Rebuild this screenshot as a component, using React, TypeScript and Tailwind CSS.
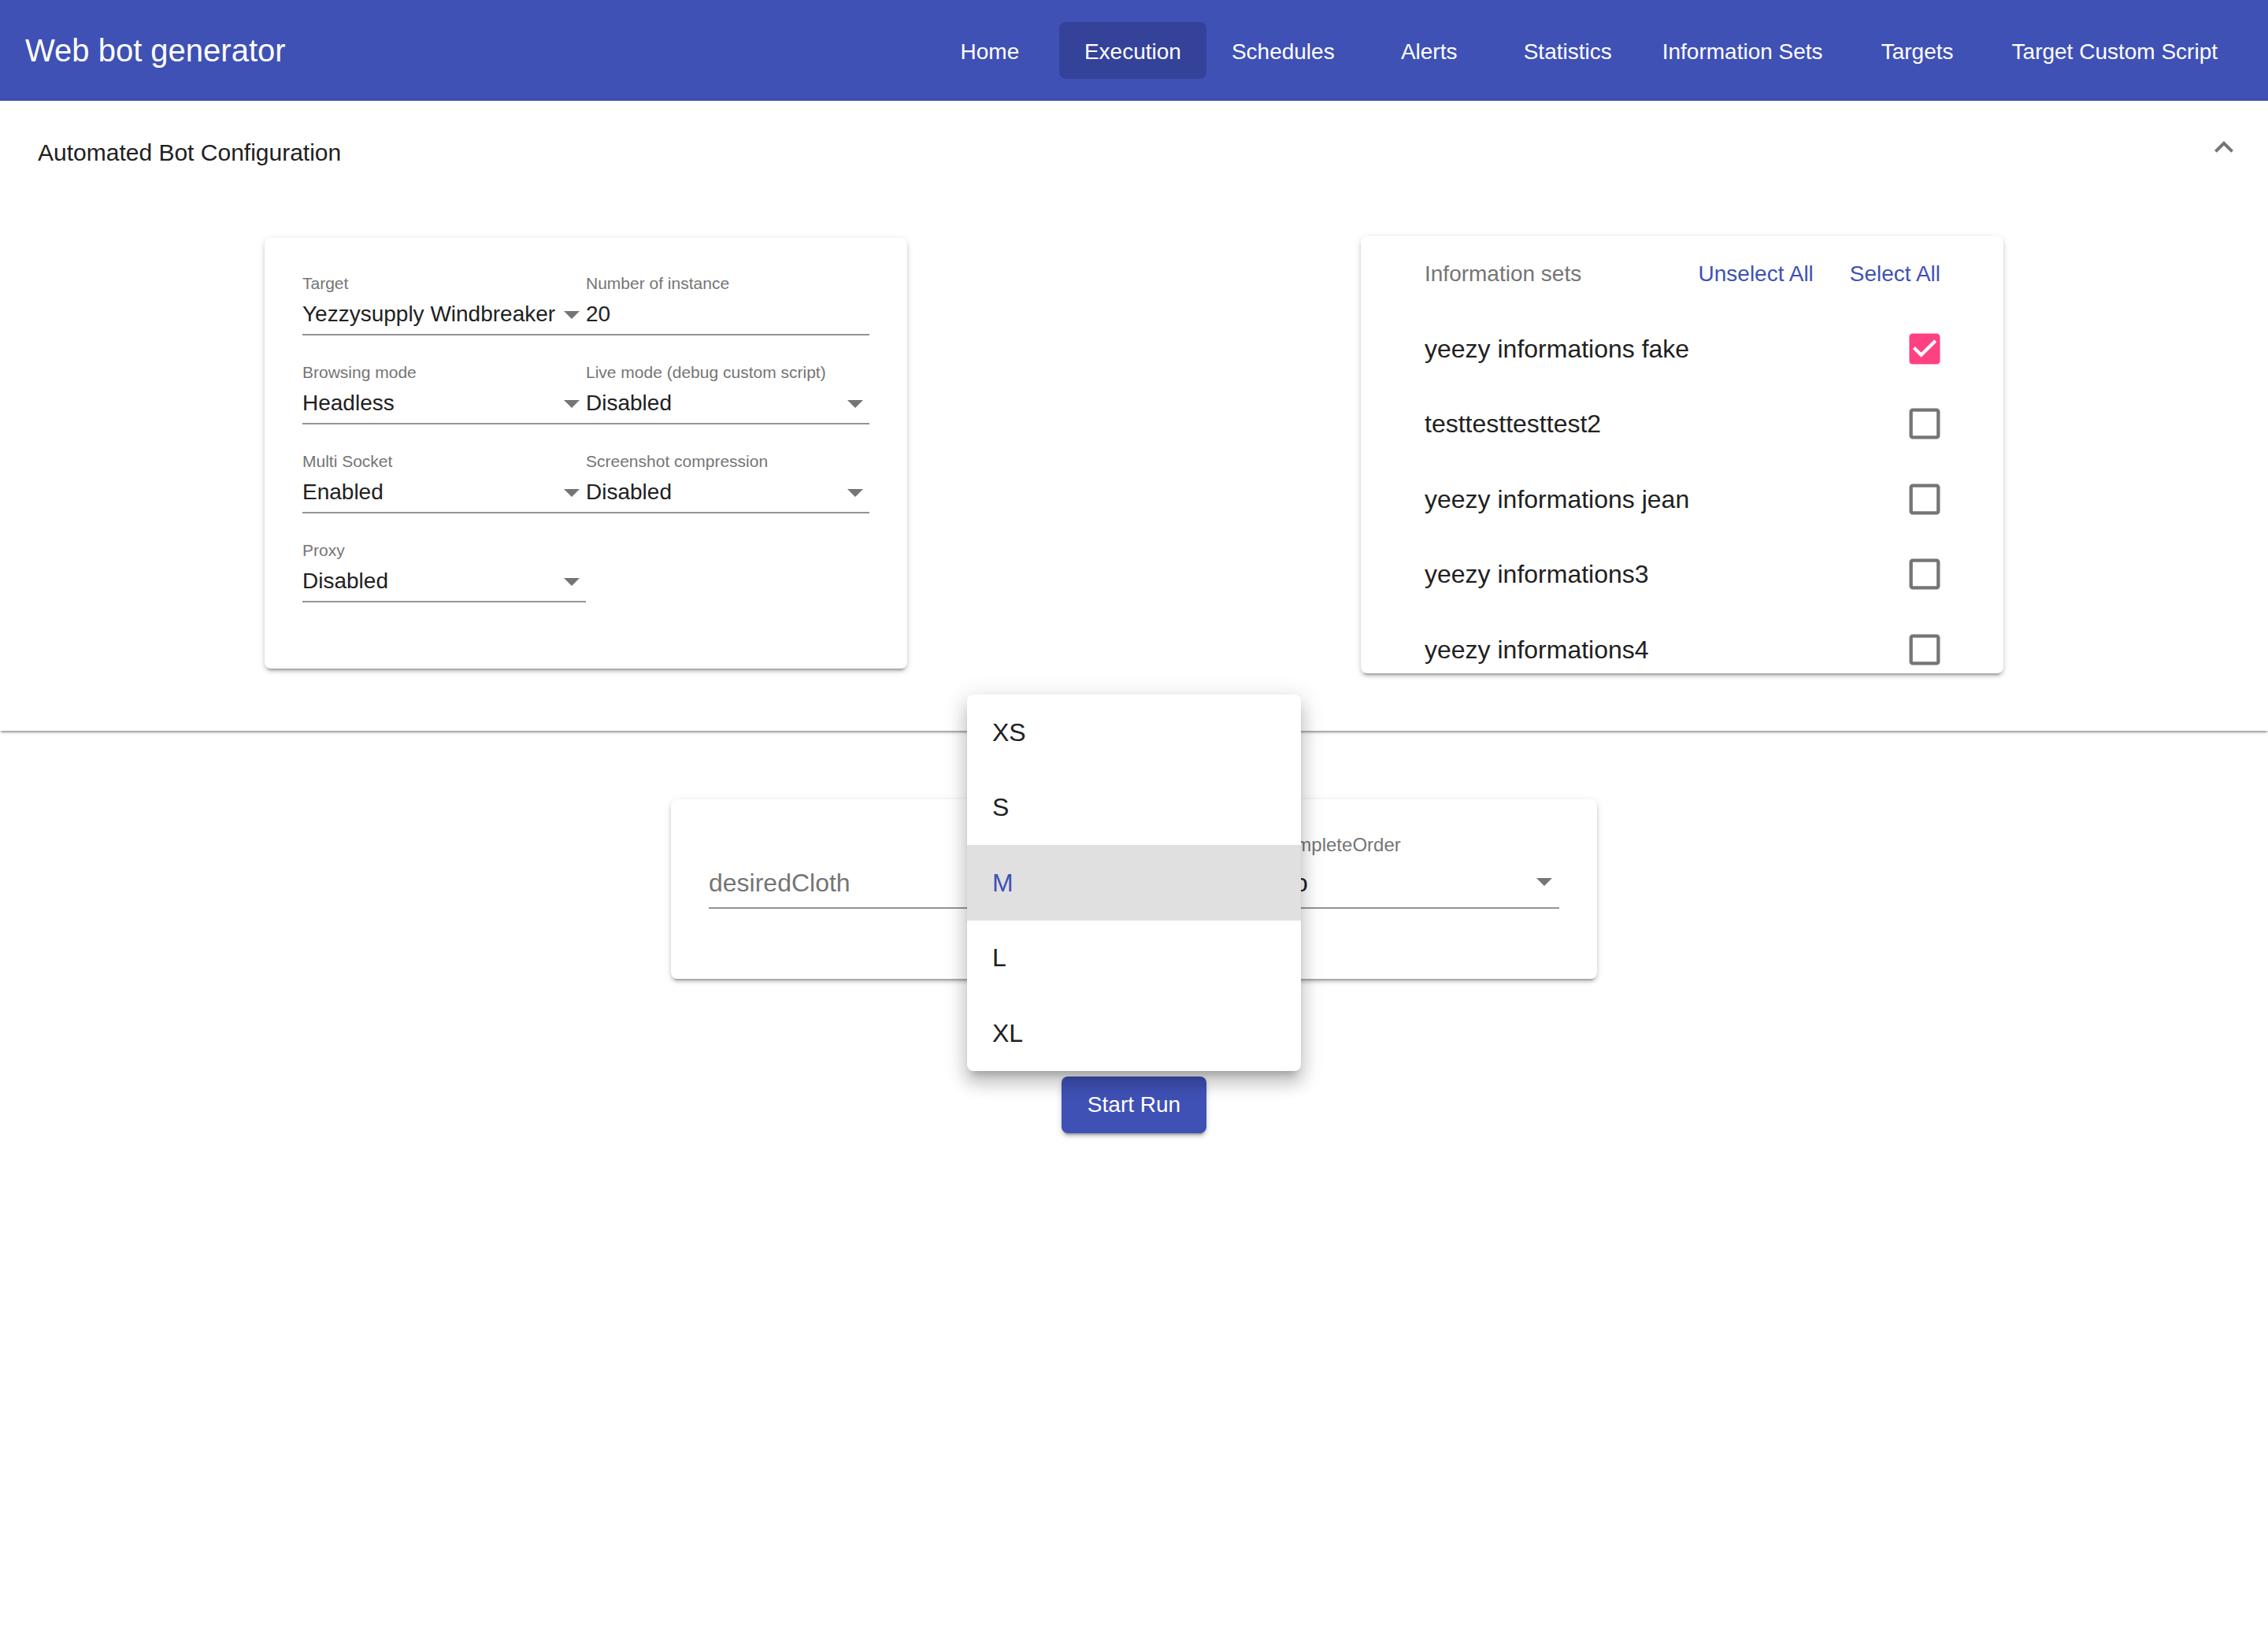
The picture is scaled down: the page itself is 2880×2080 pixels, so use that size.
import React from "react";

const NAV = ["Home", "Execution", "Schedules", "Alerts", "Statistics", "Information Sets", "Targets", "Target Custom Script"];

function Triangle({ className }: { className: string }) {
  return (
    <svg className={className} viewBox="7 10 10 5" preserveAspectRatio="none">
      <path d="M7 10l5 5 5-5z" fill="#757575" />
    </svg>
  );
}

function SmallField({ label, value, select }: { label: string; value: string; select?: boolean }) {
  return (
    <div className="relative h-[78px] flex flex-col">
      <div className="h-[24px] text-[21px] leading-[24px] text-[#757575] whitespace-nowrap">{label}</div>
      <div className="mt-[11px] h-[43px] border-b-2 border-[#949494] text-[28px] leading-[32px] text-[#212121] pb-[9px] whitespace-nowrap">
        {value}
      </div>
      {select && <Triangle className="absolute right-[8px] top-[47px] w-[20px] h-[10px]" />}
    </div>
  );
}

function BigField({
  label,
  value,
  placeholder,
  select,
  children,
}: {
  label?: string;
  value: string;
  placeholder?: boolean;
  select?: boolean;
  children?: React.ReactNode;
}) {
  return (
    <div className="relative h-[95px] flex flex-col">
      <div className="h-[28px] text-[24px] leading-[28px] text-[#757575] whitespace-nowrap">{label ?? ""}</div>
      <div
        className={`mt-[15px] h-[52px] border-b-2 border-[#949494] text-[32px] leading-[38px] pb-[12px] whitespace-nowrap ${
          placeholder ? "text-[#757575]" : "text-[#212121]"
        }`}
      >
        {value}
      </div>
      {select && <Triangle className="absolute right-[9px] top-[56px] w-[20px] h-[10px]" />}
      {children}
    </div>
  );
}

function CheckBox({ checked }: { checked: boolean }) {
  return (
    <svg className="w-[52px] h-[52px] -mr-[6px]" viewBox="0 0 24 24">
      {checked ? (
        <path
          fill="#ff4081"
          d="M19 3H5c-1.11 0-2 .9-2 2v14c0 1.1.89 2 2 2h14c1.11 0 2-.9 2-2V5c0-1.1-.89-2-2-2zm-9 14l-5-5 1.41-1.41L10 14.17l7.59-7.59L19 8l-9 9z"
        />
      ) : (
        <path
          fill="#757575"
          d="M19 5v14H5V5h14m0-2H5c-1.1 0-2 .9-2 2v14c0 1.1.9 2 2 2h14c1.1 0 2-.9 2-2V5c0-1.1-.9-2-2-2z"
        />
      )}
    </svg>
  );
}

const ITEMS = [
  { name: "yeezy informations fake", checked: true },
  { name: "testtesttesttest2", checked: false },
  { name: "yeezy informations jean", checked: false },
  { name: "yeezy informations3", checked: false },
  { name: "yeezy informations4", checked: false },
  { name: "yeezy informations5", checked: false },
];

const SIZES = ["XS", "S", "M", "L", "XL"];

const CARD_SHADOW =
  "shadow-[0_6px_2px_-4px_rgba(0,0,0,0.2),0_4px_4px_0_rgba(0,0,0,0.14),0_2px_10px_0_rgba(0,0,0,0.12)]";

export default function App() {
  return (
    <div className="min-h-[2080px] bg-white font-['Liberation_Sans',Arial,sans-serif] text-[#212121]">
      {/* App bar */}
      <header className="h-[128px] bg-[#3f51b5] flex items-center pl-[32px] pr-[32px] text-white">
        <div className="text-[40px] leading-none whitespace-nowrap">Web bot generator</div>
        <nav className="ml-auto flex items-center">
          {NAV.map((n) => (
            <div
              key={n}
              className={`h-[72px] min-w-[176px] px-[32px] pt-[3px] flex items-center justify-center text-[28px] whitespace-nowrap rounded-[8px] ${
                n === "Execution" ? "bg-[#35429a]" : ""
              }`}
            >
              {n}
            </div>
          ))}
        </nav>
      </header>

      {/* Expansion panel */}
      <section className="bg-white shadow-[0_4px_2px_-2px_rgba(0,0,0,0.2),0_2px_2px_0_rgba(0,0,0,0.14),0_2px_6px_0_rgba(0,0,0,0.12)]">
        <div className="h-[130px] flex items-center pl-[48px] pr-[32px]">
          <span className="text-[30px] text-[#212121]">Automated Bot Configuration</span>
          <svg className="ml-auto self-start mt-[35px] w-[48px] h-[48px]" viewBox="0 0 24 24">
            <path fill="#757575" d="M12 8l-6 6 1.41 1.41L12 10.83l4.59 4.58L18 14z" />
          </svg>
        </div>

        <div className="grid grid-cols-2 items-start px-[48px] pt-[42px] pb-[73px]">
          {/* Left card */}
          <div className="flex justify-center">
            <div className={`w-[816px] mt-[2px] bg-white rounded-[8px] pt-[46px] px-[48px] pb-[84px] ${CARD_SHADOW}`}>
              <div className="grid grid-cols-2 gap-y-[35px]">
                <SmallField label="Target" value="Yezzysupply Windbreaker" select />
                <SmallField label="Number of instance" value="20" />
                <SmallField label="Browsing mode" value="Headless" select />
                <SmallField label="Live mode (debug custom script)" value="Disabled" select />
                <SmallField label="Multi Socket" value="Enabled" select />
                <SmallField label="Screenshot compression" value="Disabled" select />
                <SmallField label="Proxy" value="Disabled" select />
              </div>
            </div>
          </div>

          {/* Right card */}
          <div className="flex justify-center">
            <div className={`w-[816px] h-[555px] overflow-hidden bg-white rounded-[8px] pt-[12px] pl-[81px] pr-[80px] ${CARD_SHADOW}`}>
              <div className="h-[72px] flex items-center">
                <span className="text-[28px] text-[#757575]">Information sets</span>
                <div className="ml-auto flex items-center gap-[46px] text-[28px] text-[#3f51b5]">
                  <span>Unselect All</span>
                  <span>Select All</span>
                </div>
              </div>
              <div className="pt-[11px]">
                {ITEMS.map((it) => (
                  <div key={it.name} className="h-[95.5px] flex items-center justify-between">
                    <span className="text-[32px] text-[#212121]">{it.name}</span>
                    <CheckBox checked={it.checked} />
                  </div>
                ))}
              </div>
            </div>
          </div>
        </div>
      </section>

      {/* Bottom area */}
      <div className="pt-[87px] flex flex-col items-center">
        <div className={`w-[1176px] bg-white rounded-[8px] pt-[44px] px-[48px] pb-[89px] ${CARD_SHADOW}`}>
          <div className="grid grid-cols-3">
            <BigField value="desiredCloth" placeholder />
            <BigField label="desiredSize" value="M" select>
              <div className="absolute left-[-32px] top-[-177px] w-[424px] z-10 bg-white rounded-[8px] overflow-hidden shadow-[0_10px_10px_-6px_rgba(0,0,0,0.2),0_16px_20px_2px_rgba(0,0,0,0.14),0_6px_28px_5px_rgba(0,0,0,0.12)]">
                {SIZES.map((s) => (
                  <div
                    key={s}
                    className={`h-[95.5px] flex items-center pl-[32px] text-[32px] ${
                      s === "M" ? "bg-[#e0e0e0] text-[#3f51b5]" : "text-[#212121]"
                    }`}
                  >
                    {s}
                  </div>
                ))}
              </div>
            </BigField>
            <BigField label="completeOrder" value="No" select />
          </div>
        </div>

        <button className={`mt-[124px] w-[184px] h-[72px] bg-[#3f51b5] text-white text-[28px] rounded-[8px] ${CARD_SHADOW}`}>
          Start Run
        </button>
      </div>
    </div>
  );
}
